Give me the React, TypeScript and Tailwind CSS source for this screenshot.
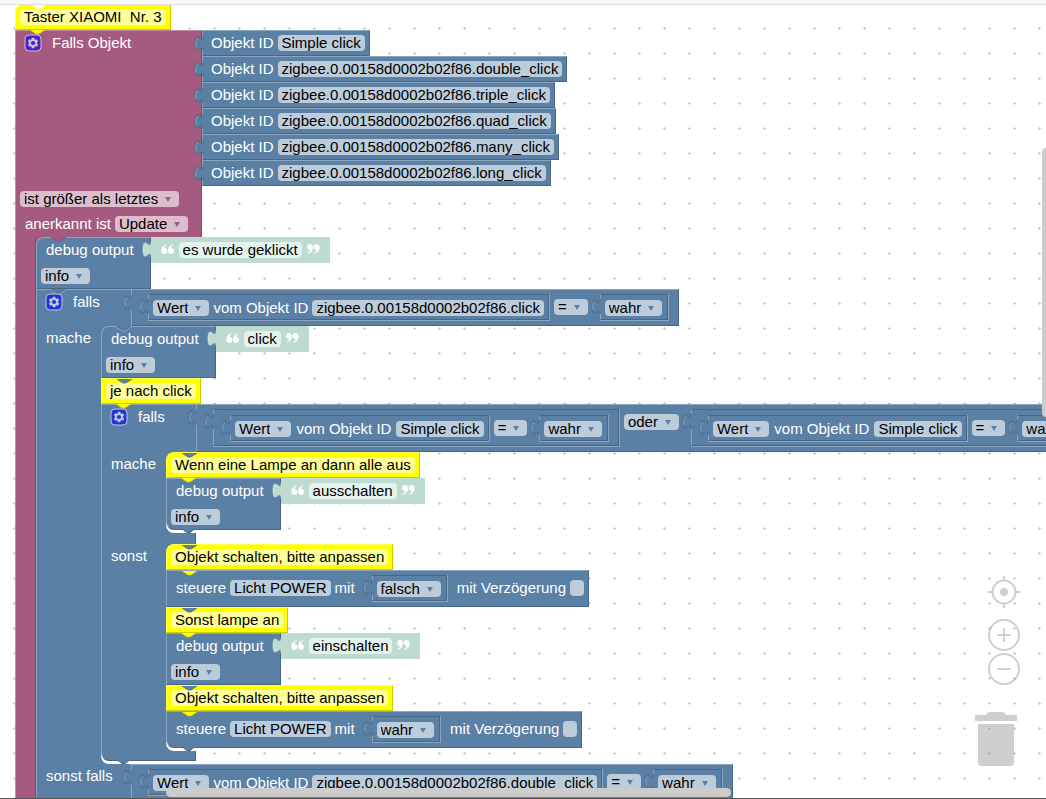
import React from 'react';

const BLUE = '#5b80a5';
const PURPLE = '#a55b80';
const YELLOW = '#ffff00';
const GREEN = '#bddbd1';

type Tone = 'blue' | 'purple' | 'yellow' | 'green';

const pillTone: Record<Tone, string> = {
  blue: 'bg-[#bdccdb]',
  purple: 'bg-[#dbbdcc]',
  yellow: 'bg-[#ffff99]',
  green: 'bg-[#e5f1ed]',
};

const edge: Record<string, { light: string; dark: string }> = {
  [BLUE]: { light: '#8ca6c0', dark: '#496684' },
  [PURPLE]: { light: '#c08ca6', dark: '#844966' },
  [YELLOW]: { light: '#ffff4d', dark: '#cccc00' },
  [GREEN]: { light: '#d1e6df', dark: '#bddbd1' },
  '#ffffff': { light: '#ffffff', dark: '#ffff4d' },
};

// bump of the block above, drawn over the top edge of the block below
function Notch({ fill, line }: { fill: string; line?: boolean }) {
  return (
    <svg className="pointer-events-none absolute left-[15px] top-0 z-10" width="15" height="6" viewBox="0 0 15 6">
      <path d="M0 0h15l-6 4H6z" fill={fill} />
      <path d="M0 0 6 4h3l6-4" fill="none" stroke={edge[fill].dark} strokeWidth=".8" />
      {line && <path d="M0 1 6 5h3l6-4" fill="none" stroke={edge[fill].light} />}
    </svg>
  );
}

// puzzle tab on the left side of a value block
function Tab({ fill }: { fill: string }) {
  return (
    <svg className="pointer-events-none absolute -left-[9px] top-0 z-10" width="10" height="22" viewBox="0 0 10 22">
      <path d="M10 5H9c0 10-8-8-8 7.5s8-2.5 8 7.5h1z" fill={fill} />
      <path d="M9 5c0 10-8-8-8 7.5s8-2.5 8 7.5" fill="none" stroke={edge[fill].dark} strokeWidth=".8" />
      <path d="M2.2 16c-1-6-.2-8 1.500-7.600" fill="none" stroke={edge[fill].light} />
    </svg>
  );
}

function Gear() {
  return (
    <button type="button" aria-label="Optionen" className="size-4 shrink-0 opacity-60">
      <svg width="16" height="16" viewBox="0 0 16 16" overflow="visible">
        <rect width="16" height="16" rx="4" fill="#0000ff" stroke="#fff" />
        <path
          fill="#fff"
          stroke="#fff"
          strokeWidth=".4"
          d="m4.203,7.296 0,1.368 -0.92,0.677 -0.11,0.41 0.9,1.559 0.41,0.11 1.043,-0.457 1.187,0.683 0.127,1.134 0.3,0.3 1.8,0 0.3,-0.299 0.127,-1.138 1.185,-0.682 1.046,0.458 0.409,-0.11 0.9,-1.559 -0.11,-0.41 -0.92,-0.677 0,-1.366 0.92,-0.677 0.11,-0.41 -0.9,-1.559 -0.409,-0.109 -1.046,0.458 -1.185,-0.682 -0.127,-1.138 -0.3,-0.299 -1.8,0 -0.3,0.3 -0.126,1.135 -1.187,0.682 -1.043,-0.457 -0.41,0.11 -0.899,1.559 0.108,0.409z"
        />
        <circle cx="8" cy="8" r="2.1" fill="#0000ff" />
      </svg>
    </button>
  );
}

function Quote({ close }: { close?: boolean }) {
  return (
    <svg className={close ? 'mb-[2px]' : 'mb-[2px] rotate-180'} width="13" height="10" viewBox="0 0 13 10" fill="#fff">
      <path d="M2.800 0C4.800 0 6 1.300 6 3.400 6 6.300 4.200 8.600 1 9.800L.5 8.900C2.100 8.200 3 7.100 3 5.900 1.300 5.900 0 4.700 0 3 0 1.300 1.200 0 2.800 0zM9.500 0c2 0 3.200 1.300 3.200 3.400 0 2.900-1.800 5.200-5 6.400l-.5-.9c1.600-.7 2.500-1.800 2.500-3C8 5.900 6.700 4.700 6.700 3c0-1.700 1.200-3 2.800-3z" />
    </svg>
  );
}

function Select({ value, options, label, tone = 'blue' }: { value: string; options?: string[]; label: string; tone?: Tone }) {
  return (
    <span className={`relative inline-flex h-4 shrink-0 rounded-sm ${pillTone[tone]}`}>
      <select
        aria-label={label}
        defaultValue={value}
        className="h-4 appearance-none bg-transparent pl-1 pr-[21px] leading-4 text-black outline-none field-sizing-content"
      >
        {(options || [value]).map((o) => (
          <option key={o}>{o}</option>
        ))}
      </select>
      <svg className="pointer-events-none absolute right-2 top-[6px]" width="6" height="5" viewBox="0 0 6 5">
        <path d="M0 0h6L3 5z" fill={tone === 'purple' ? PURPLE : BLUE} />
      </svg>
    </span>
  );
}

function TextInput({ value, label, tone }: { value: string; label: string; tone: Tone }) {
  return (
    <input
      type="text"
      aria-label={label}
      defaultValue={value}
      className={`h-4 shrink-0 rounded-sm px-1 leading-4 text-black outline-none field-sizing-content ${pillTone[tone]}`}
    />
  );
}

function ObjectId({ id }: { id: string }) {
  return (
    <button type="button" className="h-4 shrink-0 rounded-sm bg-[#bdccdb] px-1 leading-4 text-black">
      {id}
    </button>
  );
}

function Comment({ text, above = BLUE, first }: { text: string; above?: string; first?: boolean }) {
  return (
    <div
      className={`relative flex h-[26px] w-fit items-center border border-[#ffff4d] border-b-[#cccc00] border-r-[#cccc00] bg-[#ffff00] px-1 ${first ? 'rounded-tl-lg' : ''}`}
    >
      <Notch fill={above} />
      <TextInput value={text} label="Kommentar" tone="yellow" />
    </div>
  );
}

function DebugBlock({ text, above = BLUE, first, last }: { text: string; above?: string; first?: boolean; last?: boolean }) {
  return (
    <div className="relative flex w-fit items-start">
      <Notch fill={above} line={above === BLUE} />
      <div
        className={`flex flex-col border border-[#8ca6c0] border-b-[#496684] border-r-[#496684] bg-[#5b80a5] ${first ? 'rounded-tl-lg' : ''} ${last ? 'rounded-bl-lg' : ''}`}
      >
        <span className="flex h-6 items-center pl-[9px] pr-4">debug output</span>
        <span className="flex h-[26px] items-end pb-1 pl-1">
          <Select label="Stufe" value="info" options={['info', 'debug', 'warning', 'error']} />
        </span>
      </div>
      <div className="relative flex h-[26px] items-center gap-[5px] bg-[#bddbd1] px-[10px]">
        <Tab fill={GREEN} />
        <Quote />
        <TextInput value={text} label="Text" tone="green" />
        <Quote close />
      </div>
    </div>
  );
}

// value block that sits inside another block
function Socket({ children }: { children: React.ReactNode }) {
  return (
    <div className="relative ml-2 shrink-0 border-b border-r border-[#8ca6c0]">
      <Tab fill={BLUE} />
      <div className="border border-[#496684] border-l-[#8ca6c0]">{children}</div>
    </div>
  );
}

function Cell({ children }: { children: React.ReactNode }) {
  return <div className="flex h-[26px] shrink-0 items-center">{children}</div>;
}

function BoolValue({ value }: { value: string }) {
  return (
    <Socket>
      <div className="flex h-6 items-center pl-1 pr-[5px] pt-[2px]">
        <Select label="Wahrheitswert" value={value} options={['wahr', 'falsch']} />
      </div>
    </Socket>
  );
}

function Compare({ id, nested }: { id: string; nested?: boolean }) {
  return (
    <div className={`flex items-start gap-1 pl-2 pr-[9px] ${nested ? 'pb-[3px] pt-[5px]' : 'py-1'}`}>
      <Socket>
        <div className={`flex h-6 items-center px-1 pt-[2px] ${nested ? 'gap-[5px]' : 'gap-1'}`}>
          <Select label="Attribut" value="Wert" />
          <span>vom Objekt ID</span>
          <ObjectId id={id} />
        </div>
      </Socket>
      <Cell>
        <Select label="Vergleich" value="=" />
      </Cell>
      <BoolValue value="wahr" />
    </div>
  );
}

function ValueBlock({ children }: { children: React.ReactNode }) {
  return (
    <div className="relative shrink-0 border border-[#8ca6c0] border-b-[#496684] border-r-[#496684] bg-[#5b80a5]">
      <Tab fill={BLUE} />
      {children}
    </div>
  );
}

function ObjectRow({ id }: { id: string }) {
  return (
    <div className="relative flex h-[26px] w-fit items-center gap-1 border border-[#8ca6c0] border-b-[#496684] border-r-[#496684] bg-[#5b80a5] pl-2 pr-1">
      <Tab fill={BLUE} />
      <span>Objekt ID</span>
      <ObjectId id={id} />
    </div>
  );
}

function SteuereBlock({ value, last }: { value: string; last?: boolean }) {
  return (
    <div
      className={`relative flex w-fit items-start gap-1 border border-[#8ca6c0] border-b-[#496684] border-r-[#496684] bg-[#5b80a5] py-1 pl-[9px] pr-1 ${last ? 'rounded-bl-lg' : ''}`}
    >
      <Notch fill={YELLOW} />
      <Cell>steuere</Cell>
      <Cell>
        <ObjectId id="Licht POWER" />
      </Cell>
      <Cell>mit</Cell>
      <div className="px-[5px]">
        <BoolValue value={value} />
      </div>
      <label className="flex h-[26px] items-center gap-1">
        mit Verzögerung
        <input type="checkbox" className="h-4 w-[14px] appearance-none rounded-sm bg-[#bdccdb]" />
      </label>
    </div>
  );
}

function Head({ label, children, gear, above }: { label: string; children: React.ReactNode; gear?: boolean; above?: string }) {
  return (
    <div className="relative flex">
      {above && <Notch fill={above} line={above === BLUE} />}
      <div className={`w-[95px] shrink-0 border-l border-[#8ca6c0] bg-[#5b80a5] ${above ? 'border-t' : ''}`}>
        <div className="flex h-6 items-center gap-[11px] pl-[9px]">
          {gear && <Gear />}
          <span className="whitespace-nowrap">{label}</span>
        </div>
      </div>
      <ValueBlock>{children}</ValueBlock>
    </div>
  );
}

function Stack({ label, children }: { label: string; children: React.ReactNode }) {
  return (
    <div className="flex">
      <div className="w-[65px] shrink-0 border-l border-[#8ca6c0] bg-[#5b80a5]">
        <span className="flex h-6 items-center pl-[9px]">{label}</span>
      </div>
      <div className="relative pb-[3px]">
        <span className="absolute left-0 top-0 size-2 bg-[#5b80a5]" />
        <svg className="absolute bottom-0 left-0" width="30" height="14" viewBox="0 0 30 14">
          <path d="M0 0h12v14H0z" fill={BLUE} />
          <path d="M0 0v6a8 8 0 0 0 8 8h22V0z" fill="#fff" />
        </svg>
        <svg className="absolute bottom-0 left-[15px] z-10" width="15" height="4" viewBox="0 0 15 4">
          <path d="M0-1h15L9 3.500H6z" fill={BLUE} />
          <path d="M0-1 6 3.500h3L15-1" fill="none" stroke="#496684" />
        </svg>
        <div className="relative">{children}</div>
      </div>
    </div>
  );
}

function Controls() {
  return (
    <div className="absolute bottom-8 right-[26px] flex flex-col items-end opacity-40">
      <button type="button" aria-label="Zentrieren">
        <svg width="32" height="32" viewBox="0 0 32 32" fill="none" stroke="#888" strokeWidth="2">
          <circle cx="16" cy="16" r="11.500" />
          <circle cx="16" cy="16" r="4.200" fill="#888" stroke="none" />
          <path d="M16 0v4M16 28v4M0 16h4M28 16h4" />
        </svg>
      </button>
      <button type="button" aria-label="Vergrößern" className="mt-[11px]">
        <svg width="32" height="32" viewBox="0 0 32 32" fill="none" stroke="#888" strokeWidth="2">
          <circle cx="16" cy="16" r="15" />
          <path d="M9 16h14M16 9v14" />
        </svg>
      </button>
      <button type="button" aria-label="Verkleinern" className="mt-[2px]">
        <svg width="32" height="32" viewBox="0 0 32 32" fill="none" stroke="#888" strokeWidth="2">
          <circle cx="16" cy="16" r="15" />
          <path d="M9 16h14" />
        </svg>
      </button>
      <button type="button" aria-label="Papierkorb" className="mr-[3px] mt-[27px]">
        <svg width="42" height="54" viewBox="0 0 42 54" fill="#888">
          <path d="M0 3h11c1-2 2-3 4-3h12c2 0 3 1 4 3h11v6H0zM3 12h36v38a4 4 0 0 1-4 4H7a4 4 0 0 1-4-4z" />
        </svg>
      </button>
    </div>
  );
}

const objects = [
  'Simple click',
  'zigbee.0.00158d0002b02f86.double_click',
  'zigbee.0.00158d0002b02f86.triple_click',
  'zigbee.0.00158d0002b02f86.quad_click',
  'zigbee.0.00158d0002b02f86.many_click',
  'zigbee.0.00158d0002b02f86.long_click',
];

export default function App() {
  return (
    <div className="flex h-screen flex-col overflow-hidden border-b border-[#555] bg-white font-['Liberation_Sans',Arial,sans-serif] text-[15px] leading-4 text-white">
      <header className="h-1 shrink-0 bg-[#f8f8f8]" />
      <main className="relative min-h-0 flex-1 overflow-hidden border-t border-[#ddd]">
        <svg className="absolute inset-0 size-full">
          <defs>
            <pattern id="grid" x="14" y="23" width="25" height="25" patternUnits="userSpaceOnUse">
              <path d="M0 .5h2M24 .5h1M.5 0v2M.5 24v1" stroke="#ccc" />
            </pattern>
          </defs>
          <rect width="100%" height="100%" fill="url(#grid)" />
        </svg>

        <div className="relative -mt-px w-max whitespace-nowrap pl-[15px]">
          <Comment text="Taster XIAOMI  Nr. 3" above="#ffffff" first />

          <div className="relative flex">
            <Notch fill={YELLOW} />
            <div className="w-[187px] border border-b-0 border-[#c08ca6] border-r-[#844966] bg-[#a55b80]">
              <div className="flex h-[155px] items-start">
                <div className="flex h-6 items-center gap-[11px] pl-[9px]">
                  <Gear />
                  <span>Falls Objekt</span>
                </div>
              </div>
              <div className="flex h-[25px] items-center pl-1">
                <Select label="Bedingung" value="ist größer als letztes" tone="purple" />
              </div>
              <div className="flex h-[26px] items-start gap-1 pl-[9px] pt-[5px]">
                <span>anerkannt ist</span>
                <Select label="Anerkannt" value="Update" tone="purple" />
              </div>
            </div>
            <div>
              {objects.map((id) => (
                <ObjectRow key={id} id={id} />
              ))}
            </div>
          </div>

          <div className="flex">
            <div className="w-[21px] shrink-0 border-x border-[#c08ca6] border-r-[#844966] bg-[#a55b80]" />
            <div className="relative">
              <span className="absolute left-0 top-0 size-2 bg-[#a55b80]" />
              <DebugBlock text="es wurde geklickt" above={PURPLE} first />

              <Head label="falls" gear above={BLUE}>
                <Compare id="zigbee.0.00158d0002b02f86.click" />
              </Head>
              <Stack label="mache">
                <DebugBlock text="click" first />
                <Comment text="je nach click" />

                <Head label="falls" gear above={YELLOW}>
                  <div className="flex items-start gap-1 py-1 pl-2">
                    <Socket>
                      <Compare id="Simple click" nested />
                    </Socket>
                    <Cell>
                      <Select label="Verknüpfung" value="oder" options={['oder', 'und']} />
                    </Cell>
                    <Socket>
                      <Compare id="Simple click" nested />
                    </Socket>
                  </div>
                </Head>
                <Stack label="mache">
                  <Comment text="Wenn eine Lampe an dann alle aus" first />
                  <DebugBlock text="ausschalten" above={YELLOW} last />
                </Stack>
                <div className="h-[11px] w-[95px] border-x border-[#8ca6c0] border-r-[#496684] bg-[#5b80a5]" />
                <Stack label="sonst">
                  <Comment text="Objekt schalten, bitte anpassen" first />
                  <SteuereBlock value="falsch" />
                  <Comment text="Sonst lampe an" />
                  <DebugBlock text="einschalten" above={YELLOW} />
                  <Comment text="Objekt schalten, bitte anpassen" />
                  <SteuereBlock value="wahr" last />
                </Stack>
                <div className="h-[10px] w-[95px] rounded-bl-lg border-x border-b border-[#8ca6c0] border-b-[#496684] border-r-[#496684] bg-[#5b80a5]" />
              </Stack>

              <Head label="sonst falls">
                <Compare id="zigbee.0.00158d0002b02f86.double_click" />
              </Head>
            </div>
          </div>
        </div>

        <Controls />
        <div className="absolute bottom-px left-[166px] z-20 h-[9px] w-[54%] rounded-full bg-[#ccc]" />
        <div className="absolute right-0 top-[18%] z-20 h-[34%] w-1 rounded-l-sm bg-[#ccc]" />
      </main>
    </div>
  );
}
